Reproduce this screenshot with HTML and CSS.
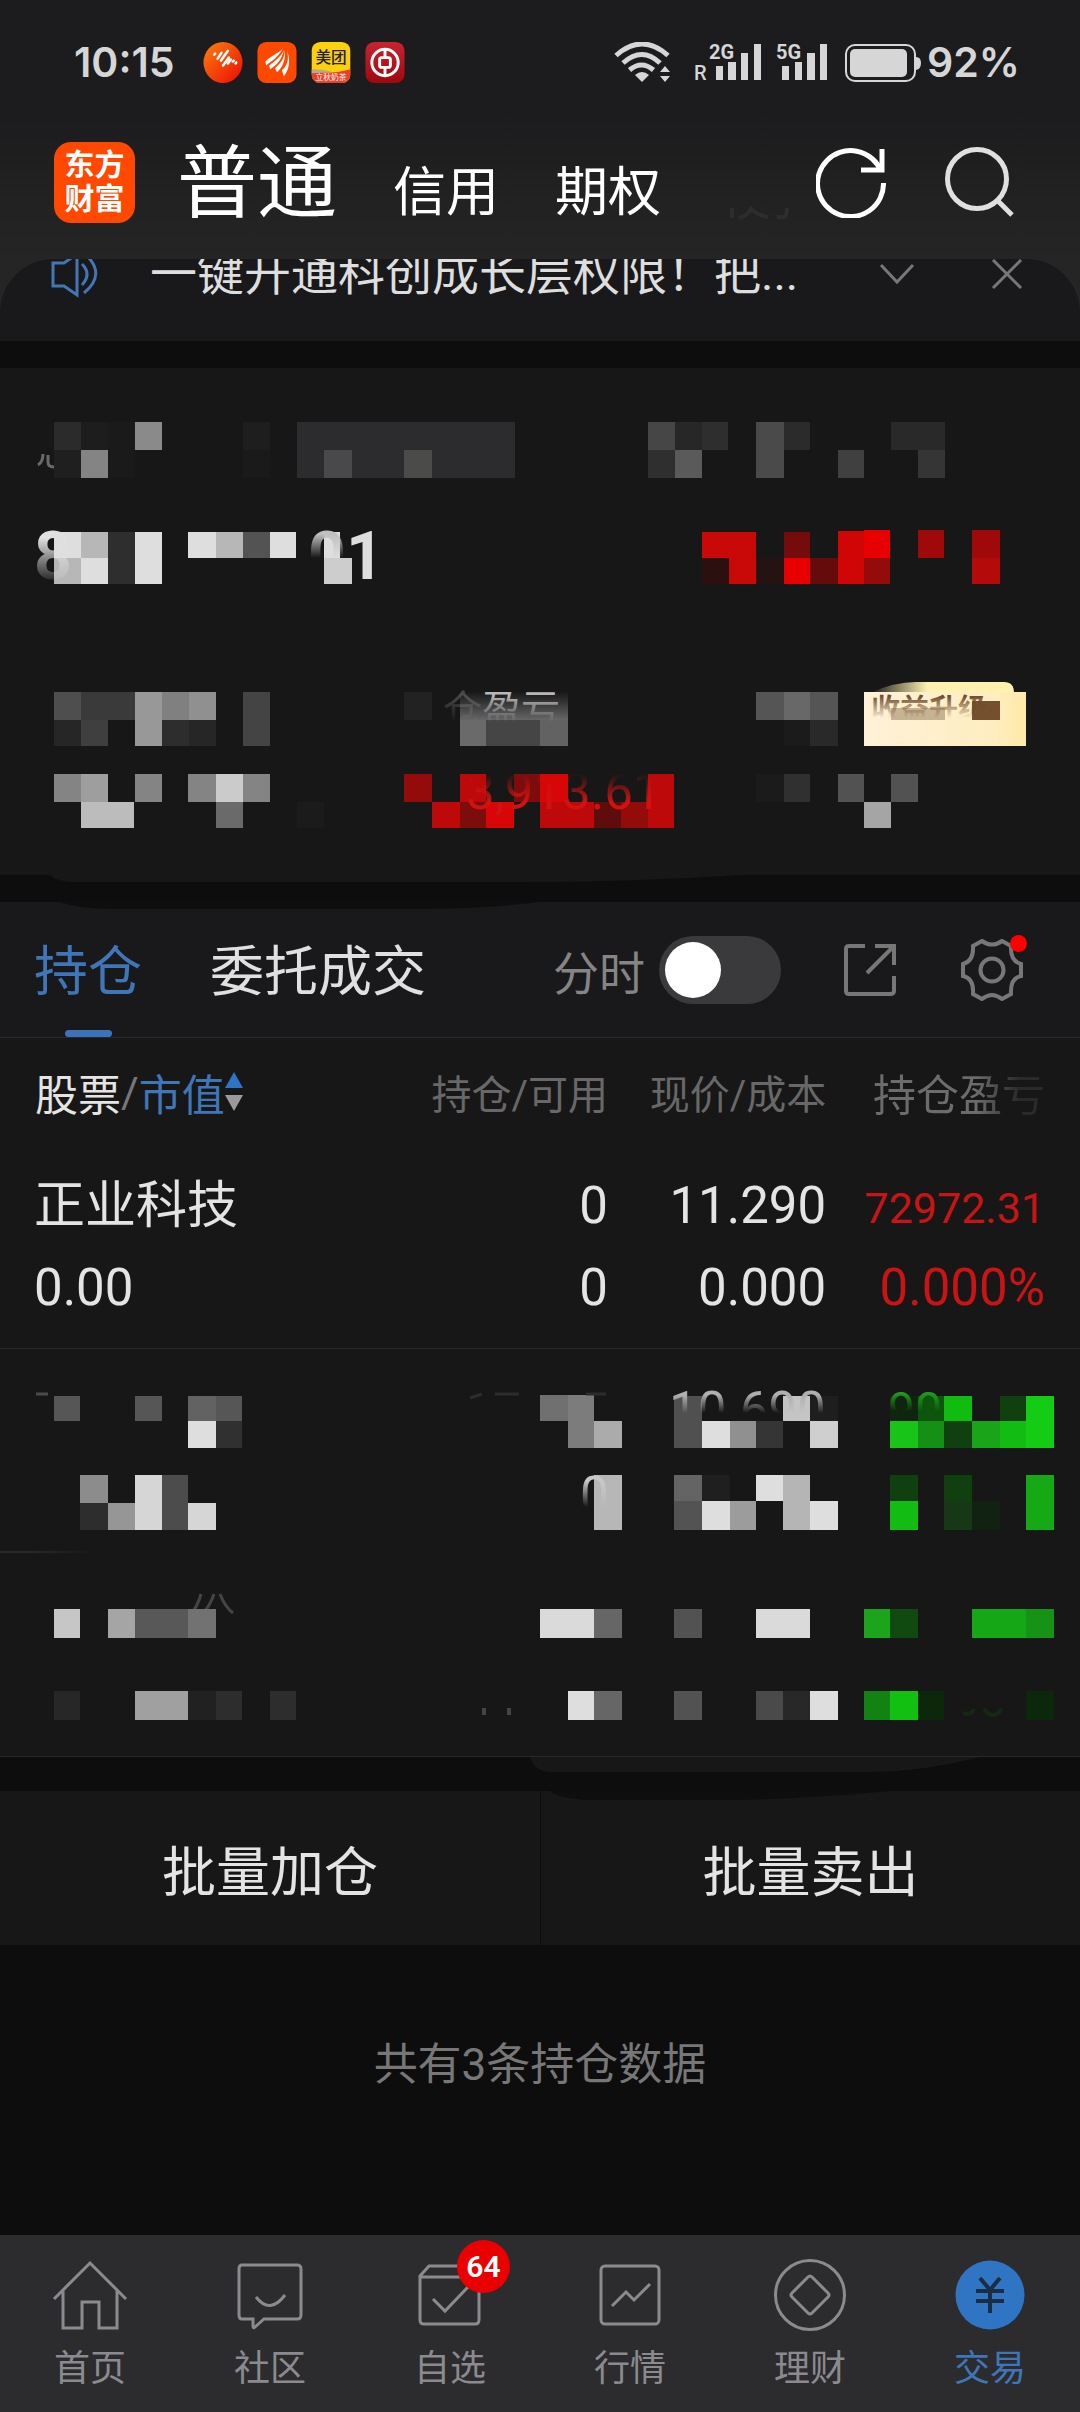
FILE: index.html
```html
<!DOCTYPE html>
<html lang="zh-CN">
<head>
<meta charset="utf-8">
<meta name="viewport" content="width=device-width, initial-scale=1">
<title>交易 - 持仓</title>
<link rel="stylesheet" href="styles.css">
</head>
<body>
<header class="top">
  <div class="status">
    <span class="clock">10:15</span>
    <div class="apps">
      <svg width="40" height="41" viewBox="0 0 40 42"><defs><linearGradient id="ga" x1="0" y1="0" x2="1" y2="1"><stop offset=".2" stop-color="#f86a0a"/><stop offset=".85" stop-color="#f01a08"/></linearGradient></defs><ellipse cx="20" cy="21" rx="20" ry="21" fill="url(#ga)"/><g stroke="#fff" stroke-width="2.600" stroke-linecap="round"><path d="M11 13l1-1M14.500 17l4-6M18 19l7-10M20 24l6-8M25 22l3-4M30 20l1-1M33 22l.5-1"/></g></svg>
      <svg width="40" height="41" viewBox="0 0 40 42"><rect width="40" height="42" rx="9" fill="#ff4800"/><path d="M26 7c-5 5-12 7-18 13l1 4c5-4 12-8 17-17zM27 8c-3 8-10 12-15 16l1 4c6-4 12-9 14-20zM28 8c0 10-6 15-10 19l2 4c6-5 9-13 8-23zM30 9c3 9 0 16-5 20l2 6c6-7 7-18 3-26z" fill="#fff"/></svg>
      <svg width="40" height="41" viewBox="0 0 40 42"><defs><clipPath id="ca"><rect width="40" height="42" rx="9"/></clipPath></defs><g clip-path="url(#ca)"><rect width="40" height="42" fill="#fdd00d"/><path d="M0 29q20 5 40-1v14H0z" fill="#e8402a"/><path d="M0 28q14 0 22 3l-22 1z" fill="#b9a88a"/></g><text x="20" y="22" font-size="16" font-weight="500" text-anchor="middle" fill="#222">美团</text><text x="20" y="39" font-size="8" text-anchor="middle" fill="#fff">立秋奶茶</text></svg>
      <svg width="40" height="41" viewBox="0 0 40 42"><defs><linearGradient id="gb" x1="0" y1="0" x2="0" y2="1"><stop stop-color="#c8242f"/><stop offset="1" stop-color="#a0070f"/></linearGradient></defs><rect width="40" height="42" rx="9" fill="url(#gb)"/><g fill="none" stroke="#fff" stroke-width="3"><circle cx="20" cy="21" r="13.500"/><rect x="14.500" y="16" width="11" height="10" rx="2"/><path d="M20 8v8M20 26v8"/></g></svg>
    </div>
    <div class="signals">
      <svg width="58" height="41" viewBox="0 0 58 41"><g fill="none" stroke="#d6d6d6" stroke-width="5"><path d="M2 13.500q26-23 52 0M9 21q19-17 37 0M15.500 28q12-10 24 0"/></g><path d="M21 33q7-6 14 0l-7 7z" fill="#d6d6d6"/><path d="M46 30l5-6 5 6zM46 34h10l-5 6z" fill="#d6d6d6"/></svg>
      <svg width="68" height="41" viewBox="0 0 68 41"><g fill="#d6d6d6"><text x="0" y="38" font-size="20" font-weight="500">R</text><text x="15" y="17" font-size="20" font-weight="700">2G</text><rect x="22" y="24" width="7" height="14"/><rect x="34" y="20" width="8" height="18"/><rect x="47" y="11" width="7" height="27"/><rect x="60" y="2" width="7" height="36"/></g></svg>
      <svg width="52" height="41" viewBox="0 0 52 41"><g fill="#d6d6d6"><text x="0" y="17" font-size="20" font-weight="700">5G</text><rect x="6" y="24" width="7" height="14"/><rect x="19" y="20" width="7" height="18"/><rect x="31" y="11" width="8" height="27"/><rect x="44" y="2" width="7" height="36"/></g></svg>
      <svg width="78" height="41" viewBox="0 0 78 41"><rect x="2" y="3" width="69" height="36" rx="9" fill="none" stroke="#d6d6d6" stroke-width="2"/><rect x="6" y="7" width="57" height="28" rx="5" fill="#d6d6d6"/><path d="M72 15q5 0 5 6t-5 7z" fill="#d6d6d6"/></svg>
    </div>
    <span class="percent">92%</span>
  </div>
  <div class="head">
    <a class="logo" href="#"><span>东方</span><span>财富</span></a>
    <nav class="kinds">
      <a class="kind kind-on" href="#">普通</a>
      <a class="kind" href="#">信用</a>
      <a class="kind" href="#">期权</a>
      <svg class="ghost" width="60" height="14" viewBox="0 0 60 14" fill="none" stroke="#2d2d2d" stroke-width="4"><path d="M3 2v10M10 12q8-2 12-9 8 7 17 8M48 11h7q3 0 3-9"/></svg>
    </nav>
    <div class="tools">
      <button class="icon" aria-label="刷新"><svg width="70" height="71" viewBox="0 0 70 71" fill="none" stroke="#fff" stroke-width="5"><path d="M65 24A33 33 0 1 0 67.500 36"/><path d="M66 2v21H45"/></svg></button>
      <button class="icon" aria-label="搜索"><svg width="70" height="71" viewBox="0 0 70 71" fill="none" stroke="#e0e0e0" stroke-width="5"><circle cx="33" cy="32" r="29.500"/><path d="M53 53l15 15"/></svg></button>
    </div>
  </div>
</header>

<main>
  <div class="notice-wrap">
  <div class="notice">
    <svg width="48" height="48" viewBox="0 0 48 48" fill="none" stroke="#4376b4" stroke-width="3"><path d="M2 13h11l13-9v41l-13-9H2zM31 14q10 10 0 21M34 4q22 20-1 39" /></svg>
    <p>一键开通科创成长层权限！把...</p>
    <button class="icon" aria-label="展开"><svg width="36" height="36" viewBox="0 0 36 36" fill="none" stroke="#777" stroke-width="3"><path d="M2 9l16 17L34 9"/></svg></button>
    <button class="icon" aria-label="关闭"><svg width="32" height="32" viewBox="0 0 32 32" fill="none" stroke="#777" stroke-width="3"><path d="M2 2l28 28M30 2L2 30"/></svg></button>
  </div>
  </div>

  <section class="assets" aria-label="资产">
    <svg class="mosaic" viewBox="0 0 1080 507">
      <defs>
        <linearGradient id="fd" gradientUnits="userSpaceOnUse" x1="0" y1="328" x2="0" y2="354"><stop stop-color="#b8b8b8"/><stop offset="1" stop-color="#b8b8b8" stop-opacity="0"/></linearGradient>
        <linearGradient id="fr" gradientUnits="userSpaceOnUse" x1="0" y1="406" x2="0" y2="434"><stop stop-color="#d01212" stop-opacity="0"/><stop offset="1" stop-color="#d01212"/></linearGradient>
        <linearGradient id="f8" gradientUnits="userSpaceOnUse" x1="0" y1="170" x2="0" y2="212"><stop stop-color="#e0e0e0"/><stop offset="1" stop-color="#e0e0e0" stop-opacity=".1"/></linearGradient>
        <linearGradient id="f0" gradientUnits="userSpaceOnUse" x1="0" y1="166" x2="0" y2="190"><stop stop-color="#c0c0c0"/><stop offset="1" stop-color="#c0c0c0" stop-opacity="0"/></linearGradient>
        <linearGradient id="gc" x1="0" y1="0" x2="0" y2="1"><stop stop-color="#181818"/><stop offset="1" stop-color="#666"/></linearGradient>
        <linearGradient id="gy" x1="0" y1="0" x2="1" y2="0"><stop stop-color="#fff1d8"/><stop offset=".8" stop-color="#feedc0"/><stop offset="1" stop-color="#ffe9a8"/></linearGradient>
        <linearGradient id="gt" x1="0" y1="0" x2="1" y2="0"><stop stop-color="#fff2b0" stop-opacity="0"/><stop offset=".4" stop-color="#fff2b0"/></linearGradient>
        <linearGradient id="gx" gradientUnits="userSpaceOnUse" x1="0" y1="328" x2="0" y2="350"><stop stop-color="#6e4c2c"/><stop offset="1" stop-color="#6e4c2c" stop-opacity="0"/></linearGradient>
      </defs>
      <path d="M43 86q0 8-5 11M48 87v7q0 5 6 5h8q3 0 4-6" fill="none" stroke="#6a6a6a" stroke-width="3"/>
      <g shape-rendering="crispEdges">
      <path fill="#2b2b2b" d="M54 54h27v28H54z"/><path fill="#1f1f1f" d="M54 82h27v28H54z"/><path fill="#1d1d1d" d="M81 54h27v28H81z"/><path fill="#848484" d="M81 82h27v28H81z"/><path fill="#1a1a1a" d="M108 54h27v56h-27z"/><path fill="#8a8a8a" d="M135 54h27v28h-27z"/><path fill="#1e1e1e" d="M243 54h27v28h-27z"/><path fill="#1a1a1a" d="M243 82h27v28h-27z"/>
      <path fill="#2c2c2e" d="M297 54h218v56H297z"/><path fill="#49494b" d="M324 82h28v28h-28z"/><path fill="#4b4b49" d="M404 82h28v28h-28z"/>
      <path fill="#464646" d="M648 54h27v28h-27z"/><path fill="#2f2f2f" d="M648 82h27v28h-27z"/><path fill="#272727" d="M675 54h27v28h-27z"/><path fill="#5a5a5a" d="M675 82h27v28h-27z"/><path fill="#2e2e2e" d="M702 54h26v28h-26z"/><path fill="#4a4a4a" d="M756 54h28v56h-28z"/><path fill="#2b2b2b" d="M784 54h26v28h-26z"/><path fill="#404040" d="M838 82h26v28h-26z"/><path fill="#292929" d="M891 54h54v28h-54z"/><path fill="#353535" d="M918 82h27v28h-27z"/>
      <path fill="#dedede" d="M54 164h27v26H54zM81 190h27v26H81zM135 164h27v52h-27zM188 164h28v26h-28zM270 164h26v26h-26zM324 164h16v26h-16z"/><path fill="#b7b7b7" d="M54 190h27v26H54zM81 164h27v26H81zM216 164h27v26h-27z"/><path fill="#2e2e2e" d="M108 164h27v52h-27z"/><path fill="#535353" d="M243 164h27v26h-27z"/><path fill="#cdcdcd" d="M324 190h28v26h-28z"/>
      <path fill="#c90808" d="M702 164h54v26h-54zM729 190h27v26h-27z"/><path fill="#2c1010" d="M702 190h27v26h-27z"/><path fill="#251212" d="M756 190h28v26h-28z"/><path fill="#760b0b" d="M784 164h26v26h-26z"/><path fill="#e80000" d="M784 190h26v26h-26zM864 162h26v28h-26z"/><path fill="#660b0b" d="M810 190h28v26h-28z"/><path fill="#d00505" d="M838 163h26v53h-26z"/><path fill="#940b0b" d="M864 190h26v26h-26z"/><path fill="#a00909" d="M918 162h26v28h-26zM972 162h28v28h-28z"/><path fill="#b50a0a" d="M972 190h28v26h-28z"/>
      <path fill="#4e4e4e" d="M54 324h27v28H54z"/><path fill="#262626" d="M54 352h27v26H54zM189 352h27v26h-27z"/><path fill="#3a3a3a" d="M81 324h54v28H81z"/><path fill="#3f3f3f" d="M81 352h27v26H81z"/><path fill="#989898" d="M135 324h27v54h-27z"/><path fill="#808080" d="M162 324h27v28h-27z"/><path fill="#2d2d2d" d="M162 352h27v26h-27z"/><path fill="#909090" d="M189 324h27v28h-27z"/><path fill="#444" d="M243 324h27v54h-27z"/>
      <path fill="#222" d="M404 324h28v28h-28z"/><path fill="url(#gc)" d="M460 324h108v28H460z"/><path fill="#6a6a6a" d="M460 352h26v26h-26z"/><path fill="#454545" d="M486 352h54v26h-54z"/><path fill="#626262" d="M540 352h28v26h-28z"/>
      <path fill="#555" d="M756 324h82v28h-82z"/><path fill="#686868" d="M784 324h26v28h-26z"/><path fill="#1b1b1b" d="M784 352h26v26h-26z"/><path fill="#292929" d="M810 352h28v26h-28z"/>
      <path fill="#848484" d="M54 406h27v28H54zM135 406h27v28h-27zM188 406h28v28h-28zM243 406h27v28h-27z"/><path fill="#9e9e9e" d="M81 406h27v28H81z"/><path fill="#bcbcbc" d="M81 434h53v26H81z"/><path fill="#cbcbcb" d="M216 406h27v28h-27z"/><path fill="#6a6a6a" d="M216 434h27v26h-27z"/><path fill="#1b1b1b" d="M297 434h27v26h-27z"/>
      <path fill="#940b0b" d="M404 406h28v28h-28zM621 434h27v26h-27z"/><path fill="#bd0909" d="M432 434h28v26h-28zM460 406h26v28h-26zM540 434h54v26h-54zM648 406h26v54h-26z"/><path fill="#7d0c0c" d="M460 434h26v26h-26zM514 406h26v28h-26z"/><path fill="#d80606" d="M486 434h28v26h-28zM540 406h28v28h-28z"/><path fill="#5e0c0c" d="M594 434h27v26h-27z"/>
      <path fill="#1b1b1b" d="M756 406h28v28h-28z"/><path fill="#303030" d="M784 406h26v28h-26z"/><path fill="#525252" d="M838 406h26v28h-26zM891 406h27v28h-27z"/><path fill="#a5a5a5" d="M864 434h27v26h-27z"/>
      </g>
      <text class="num bold" x="34" y="211" font-size="66" fill="url(#f8)">8</text>
      <text class="num bold" x="308" y="211" font-size="66" fill="url(#f0)">0<tspan fill="#dedede">1</tspan></text>
      <text x="443" y="355" font-size="39" fill="url(#fd)"><tspan fill-opacity=".3">仓</tspan>盈亏</text>
      <text class="num" x="466" y="441" font-size="51" fill="url(#fr)">3,913.61</text>
      <path fill="url(#gt)" d="M870 325q24-11 46-11h88q10 0 10 11v10H870z"/>
      <rect x="864" y="324" width="162" height="54" fill="url(#gy)"/>
      <path fill="#a08a6a" d="M891 340h54v12h-54z" opacity=".6"/><path fill="#74502e" d="M972 333h28v19h-28z"/>
      <text x="871" y="352" font-size="29" font-weight="700" fill="url(#gx)">收益升级›</text>
    </svg>
  </section>
  <div class="gap"><svg class="smear" viewBox="0 0 1080 36" preserveAspectRatio="none"><path fill="#0e0e0e" d="M60 27h480q-60 8-170 7H110q-30 0-50-7z"/><path fill="#171717" d="M50 0h690q-120 8-250 7H70q-14-1-20-7z"/></svg></div>

  <section class="panel">
    <div class="tabs">
      <button class="tab tab-on">持仓</button>
      <button class="tab">委托成交</button>
      <label class="switch">分时<input type="checkbox" role="switch"></label>
      <button class="icon" aria-label="导出"><svg width="54" height="54" viewBox="0 0 54 54" fill="none" stroke="#777" stroke-width="4"><path d="M22 3H6q-3 0-3 3v42q0 3 3 3h41q4 0 4-3V33M32 3h19v19M51 3L24 30"/></svg></button>
      <button class="icon gear" aria-label="设置"><svg width="62" height="62" viewBox="0 0 62 62" fill="none" stroke="#777" stroke-width="4"><path d="M21 2q10 7 20 0l9 5q-1 15 10 18v12q-11 2-10 18l-9 5q-10-8-20 0l-9-5q1-16-10-18V25q11-3 10-18z"/><circle cx="31" cy="31" r="11.500"/></svg></button>
    </div>
    <table class="book">
      <thead><tr>
        <th class="c1" scope="col"><button class="sort">股票<i>/</i><b>市值</b><svg width="18" height="40" viewBox="0 0 18 40"><path d="M0 16L9 0l9 16z" fill="#2f74c4"/><path d="M0 23h18L9 39z" fill="#9a9a9a"/></svg></button></th>
        <th class="c2" scope="col">持仓/可用</th>
        <th class="c3" scope="col">现价/成本</th>
        <th class="c4" scope="col"><span class="fade">持仓盈亏</span></th>
      </tr></thead>
      <tbody>
        <tr class="row"><td>正业科技<br>0.00</td><td>0<br>0</td><td>11.290<br>0.000</td><td class="up"><span class="small">72972.31</span><br>0.000%</td></tr>
        <tr><td class="masked" colspan="4">
          <svg class="mosaic" viewBox="0 0 1080 204">
            <defs>
              <linearGradient id="ft" gradientUnits="userSpaceOnUse" x1="0" y1="46" x2="0" y2="64"><stop stop-color="#b0b0b0"/><stop offset="1" stop-color="#b0b0b0" stop-opacity="0"/></linearGradient>
              <linearGradient id="fz" gradientUnits="userSpaceOnUse" x1="0" y1="132" x2="0" y2="158"><stop stop-color="#c8c8c8"/><stop offset="1" stop-color="#c8c8c8" stop-opacity="0"/></linearGradient>
              <linearGradient id="fg" gradientUnits="userSpaceOnUse" x1="0" y1="44" x2="0" y2="62"><stop stop-color="#1fa01f"/><stop offset="1" stop-color="#1fa01f" stop-opacity="0"/></linearGradient>
              <linearGradient id="fl" x1="0" y1="0" x2="1" y2="0"><stop offset=".3" stop-color="#2a2a2a"/><stop offset="1" stop-color="#2a2a2a" stop-opacity="0"/></linearGradient>
            </defs>
            <g shape-rendering="crispEdges">
            <path fill="#565656" d="M54 47h26v25H54zM135 47h27v25h-27zM216 47h26v25h-26z"/><path fill="#626262" d="M188 47h28v25h-28z"/><path fill="#dedede" d="M188 72h28v27h-28z"/><path fill="#303030" d="M216 72h26v27h-26z"/>
            <path fill="#8c8c8c" d="M80 126h28v28H80z"/><path fill="#2d2d2d" d="M80 154h28v27H80z"/><path fill="#969696" d="M108 154h27v27h-27z"/><path fill="#d6d6d6" d="M135 126h27v55h-27zM188 154h28v27h-28z"/><path fill="#4c4c4c" d="M162 126h26v55h-26z"/>
            <path fill="#707070" d="M540 46h28v26h-28z"/><path fill="#7c7c7c" d="M568 46h26v53h-26z"/><path fill="#ababab" d="M594 72h28v27h-28z"/><path fill="#505050" d="M674 47h28v52h-28z"/><path fill="#dedede" d="M702 72h28v27h-28z"/><path fill="#909090" d="M730 72h26v27h-26z"/><path fill="#353535" d="M756 72h27v27h-27z"/><path fill="#c4c4c4" d="M783 47h27v25h-27z"/><path fill="#1e1e1e" d="M810 47h28v25h-28z"/><path fill="#cfcfcf" d="M810 72h28v27h-28z"/>
            <path fill="#b7b7b7" d="M594 126h28v55h-28z"/><path fill="#646464" d="M674 126h28v26h-28z"/><path fill="#535353" d="M674 152h28v29h-28z"/><path fill="#1f1f1f" d="M702 126h28v26h-28z"/><path fill="#dedede" d="M702 152h28v29h-28zM756 126h27v26h-27zM810 152h28v29h-28z"/><path fill="#9c9c9c" d="M730 152h26v29h-26z"/><path fill="#b5b5b5" d="M783 126h27v55h-27z"/>
            <path fill="#10250f" d="M890 47h28v25h-28z"/><path fill="#17c417" d="M890 72h28v27h-28z"/><path fill="#0d550d" d="M918 47h26v25h-26z"/><path fill="#159015" d="M918 72h26v27h-26z"/><path fill="#10bc10" d="M944 47h28v25h-28z"/><path fill="#104010" d="M944 72h28v27h-28zM1000 47h26v25h-26zM890 126h28v26h-28zM944 126h28v26h-28z"/><path fill="#1aa41a" d="M972 72h28v27h-28z"/><path fill="#12bc12" d="M1000 72h26v27h-26zM890 152h28v29h-28z"/><path fill="#15cc15" d="M1026 47h28v52h-28z"/><path fill="#163816" d="M944 152h28v29h-28z"/><path fill="#122212" d="M972 152h28v29h-28z"/><path fill="#15aa15" d="M1026 126h28v55h-28z"/>
            <path fill="url(#fl)" d="M0 202h95v2H0z"/>
            </g>
            <path d="M36 45h12" stroke="#4a4a4a" stroke-width="3"/><path d="M470 49l12-4M495 45h24M586 45h20" stroke="#2c2c2c" stroke-width="3"/>
            <text class="num" x="669" y="79" font-size="51" fill="url(#ft)">10.690</text>
            <text class="num" x="580" y="164" font-size="51" fill="url(#fz)">0</text>
            <text class="num" x="888" y="77" font-size="48" fill="url(#fg)">90</text>
          </svg></td></tr>
        <tr><td class="masked" colspan="4">
          <svg class="mosaic" viewBox="0 0 1080 203">
            <path d="M201 41q-4 14-10 19M214 41q-4 12-11 19M220 41q5 13 13 19" fill="none" stroke="#454545" stroke-width="3"/>
            <path d="M484 162v-7M509 162v-7" stroke="#444" stroke-width="4"/>
            <g shape-rendering="crispEdges">
            <path fill="#c6c6c6" d="M54 56h26v29H54z"/><path fill="#a5a5a5" d="M108 56h27v29h-27z"/><path fill="#585858" d="M135 56h53v29h-53z"/><path fill="#727272" d="M188 56h28v29h-28z"/><path fill="#dadada" d="M540 56h54v29h-54zM756 56h54v29h-54z"/><path fill="#666" d="M594 56h28v29h-28zM594 138h28v29h-28z"/><path fill="#525252" d="M674 56h28v29h-28zM674 138h28v29h-28z"/><path fill="#1ca51c" d="M864 56h26v29h-26z"/><path fill="#104a10" d="M890 56h28v29h-28z"/><path fill="#15a715" d="M972 56h54v29h-54z"/><path fill="#169216" d="M1026 56h28v29h-28z"/>
            <path fill="#272727" d="M54 138h26v29H54z"/><path fill="#a0a0a0" d="M135 138h53v29h-53z"/><path fill="#212121" d="M188 138h28v29h-28z"/><path fill="#2d2d2d" d="M216 138h26v29h-26zM270 138h26v29h-26z"/><path fill="#dedede" d="M568 138h26v29h-26zM810 138h28v29h-28z"/><path fill="#4a4a4a" d="M756 138h27v29h-27z"/><path fill="#282828" d="M783 138h27v29h-27z"/><path fill="#128212" d="M864 138h26v29h-26z"/><path fill="#12c012" d="M890 138h28v29h-28z"/><path fill="#0b280b" d="M918 138h26v29h-26zM1026 138h28v29h-28z"/>
            </g>
            <path d="M963 160q8 3 11-4M984 156q9 12 18 0" fill="none" stroke="#142814" stroke-width="4"/>
          </svg></td></tr>
      </tbody>
    </table>
  </section>
  <div class="gap gap-tall"><svg class="smear" viewBox="0 0 1080 44" preserveAspectRatio="none"><path fill="#0e0e0e" d="M550 34h340q-100 10-200 9H590q-30-1-40-9z"/><path fill="#171717" d="M530 0h450q-60 16-120 15H550q-16-1-20-15z"/></svg></div>

  <div class="batch">
    <button>批量加仓</button>
    <button>批量卖出</button>
  </div>
  <p class="total">共有3条持仓数据</p>
</main>

<nav class="dock">
  <a href="#"><svg viewBox="0 0 76 76"><path d="M2 42L38 6l36 36M11 34v37h19V45h17v26h18V34"/></svg>首页</a>
  <a href="#"><svg viewBox="0 0 76 76"><path d="M10 8h55q4 0 4 4v46q0 4-4 4H32l-9 8q-2 2-2-1v-7H10q-3 0-3-4V12q0-4 3-4zM24 40q14 18 29-2"/></svg>社区</a>
  <a href="#"><svg viewBox="0 0 76 76"><path d="M8 19l9-10h40l10 10v44q0 4-4 4H12q-4 0-4-4zM8 20h59M21 42l12 12 23-24"/></svg><em>64</em>自选</a>
  <a href="#"><svg viewBox="0 0 76 76"><rect x="9" y="9" width="58" height="58" rx="4"/><path d="M20 49l14-14 8 8 16-16"/></svg>行情</a>
  <a href="#"><svg viewBox="0 0 76 76"><circle cx="38" cy="38" r="34.500"/><path d="M36 20q2-2 4 0l16 16q2 2 0 4L40 56q-2 2-4 0L20 40q-2-2 0-4z"/></svg>理财</a>
  <a class="here" href="#"><svg viewBox="0 0 76 76"><circle cx="38" cy="38" r="34.500"/><path d="M28 21l10 12 10-12M24 34h28M24 44h28M38 33v23"/></svg>交易</a>
</nav>
</body>
</html>
```
FILE: styles.css
```css
* { box-sizing: border-box; }
body {
  margin: 0;
  min-height: 100vh;
  display: flex;
  flex-direction: column;
  background: #0d0d0d;
  color: #e4e4e4;
  font-family: Roboto, "Noto Sans CJK SC", sans-serif;
}
a { color: inherit; text-decoration: none; }
button { margin: 0; padding: 0; border: 0; background: none; color: inherit; font: inherit; }
svg { display: block; flex: none; }
p { margin: 0; }
main { flex: 1; }
.icon { display: flex; }
.num { font-family: Roboto, sans-serif; }
.bold { font-weight: 700; }

.top { background: linear-gradient(#1c1c1e 110px, #252525 259px); }
.status {
  display: flex;
  align-items: center;
  height: 105px;
  padding: 20px 60px 0 74px;
  color: #d6d6d6;
}
.clock, .percent { font: 600 41px/1 Inter, sans-serif; }
.clock { width: 129px; }
.apps { display: flex; gap: 14px; }
.signals { display: flex; gap: 14px; margin-left: auto; }
.signals svg:nth-child(2) { margin-left: 8px; }
.signals svg:nth-child(4) { margin-left: 2px; }
.percent { margin-left: 5px; }
.head {
  display: flex;
  align-items: center;
  height: 154px;
  padding: 0 66px 0 54px;
}
.logo {
  display: flex;
  flex-direction: column;
  justify-content: center;
  align-items: center;
  width: 81px;
  height: 81px;
  border-radius: 17px;
  background: #ff4800;
  color: #fff;
  font-weight: 700;
  font-size: 30px;
  line-height: 34px;
}
.kinds { display: flex; align-items: baseline; margin-left: 42px; padding-top: 12px; color: #fff; font-size: 53px; line-height: 110px; }
.kind { margin-right: 56px; }
.kind-on { font-size: 80px; }
.ghost { align-self: flex-end; margin: 0 0 28px 12px; }
.tools { display: flex; gap: 58px; margin-left: auto; }

.notice-wrap { background: #252525; }
.notice {
  display: flex;
  align-items: flex-start;
  height: 82px;
  padding: 0 57px 0 51px;
  overflow: hidden;
  border-radius: 54px 54px 0 0;
  background: #19191b;
}
.notice > * { height: 64px; margin-top: -17px; align-items: center; }
.notice p { flex: 1; margin-left: 51px; color: #dedede; font-size: 47px; line-height: 64px; white-space: nowrap; }
.notice .icon + .icon { margin-left: 76px; }

.assets { margin-top: 27px; background: #171717; }
.mosaic { width: 100%; height: auto; }
.gap { position: relative; height: 27px; }
.gap-tall { height: 34px; }
.smear { position: absolute; top: 0; left: 0; z-index: 1; width: 100%; height: 36px; }
.gap-tall .smear { height: 44px; }

.panel { background: #171717; }
.tabs {
  display: flex;
  align-items: center;
  height: 136px;
  padding: 0 57px 0 34px;
  border-bottom: 1px solid #29292b;
  background: #19191b;
  font-size: 54px;
}
.tab { position: relative; height: 135px; margin-right: 68px; padding-top: 7px; line-height: 128px; color: #e0e0e0; }
.tab-on { color: #3f76b8; }
.tab-on::after {
  content: "";
  position: absolute;
  left: 50%;
  bottom: 0;
  width: 47px;
  height: 7px;
  margin-left: -23px;
  border-radius: 4px;
  background: #3a73ba;
}
.switch { display: flex; align-items: center; gap: 14px; margin: 0 62px 0 auto; color: #858585; font-size: 46px; }
.switch input {
  appearance: none;
  width: 122px;
  height: 68px;
  margin: 0;
  padding: 6px;
  border-radius: 34px;
  background: #3a3a3c;
}
.switch input::before { content: ""; display: block; width: 56px; height: 56px; border-radius: 50%; background: #fff; }
.switch input:checked::before { margin-left: auto; }
.gear { position: relative; margin-left: 64px; }
.gear::after { content: ""; position: absolute; top: -4px; right: -4px; width: 17px; height: 17px; border-radius: 50%; background: #f00; }

.book { width: 100%; border-collapse: collapse; table-layout: fixed; }
.book th { height: 107px; padding: 0; color: #686868; font-size: 40px; font-weight: 400; text-align: right; white-space: nowrap; }
.book .c1 { width: 36%; padding-left: 35px; text-align: left; }
.book .c2 { width: 20.3%; }
.book .c3 { width: 20.2%; }
.book .c4 { padding-right: 35px; font-size: 43px; }
.sort { display: flex; align-items: center; color: #e4e4e4; font-size: 43px; }
.sort i { color: #777; font-style: normal; }
.sort b { color: #3f76b8; font-weight: 400; }
.fade { background: linear-gradient(90deg, #6c6c6c 60%, #2a2a2a 85%); background-clip: text; -webkit-background-clip: text; color: transparent; }
.row { border-bottom: 1px solid #29292b; }
.row td { padding: 20px 0 19px; font-size: 51px; line-height: 82px; text-align: right; white-space: nowrap; }
.row td:first-child { padding-left: 34px; text-align: left; }
.row td:last-child { padding-right: 35px; }
.book .up { color: #c81414; }
.small { font-size: 43px; }
.row br + br { display: none; }
.row .small { line-height: 1; }
.book .masked { padding: 0; }
.book tr:last-child .masked { border-bottom: 1px solid #29292b; }

.batch { display: grid; grid-template-columns: 1fr 1fr; background: #171717; }
.batch button { height: 154px; font-size: 54px; }
.batch button + button { border-left: 1px solid #0d0d0d; }
.total { padding: 90px 0; color: #777; font-size: 44px; line-height: 60px; text-align: center; }

.dock { display: grid; grid-template-columns: repeat(6, 1fr); height: 177px; background: #2c2c2e; }
.dock a {
  position: relative;
  display: flex;
  flex-direction: column;
  align-items: center;
  padding-top: 22px;
  color: #8b8b8f;
  font-size: 36px;
  line-height: 72px;
}
.dock svg { width: 76px; height: 76px; fill: none; stroke: #8b8b8f; stroke-width: 3; }
.dock em {
  position: absolute;
  top: 5px;
  left: 50%;
  width: 53px;
  height: 53px;
  margin-left: 7px;
  border-radius: 50%;
  background: #ea0000;
  color: #fff;
  font: 600 30px/54px Roboto, sans-serif;
  text-align: center;
}
.dock .here { color: #3f76b8; }
.here circle { fill: #3074c4; stroke: none; }
.here path { stroke: #1c2c42; stroke-width: 4; }
```
